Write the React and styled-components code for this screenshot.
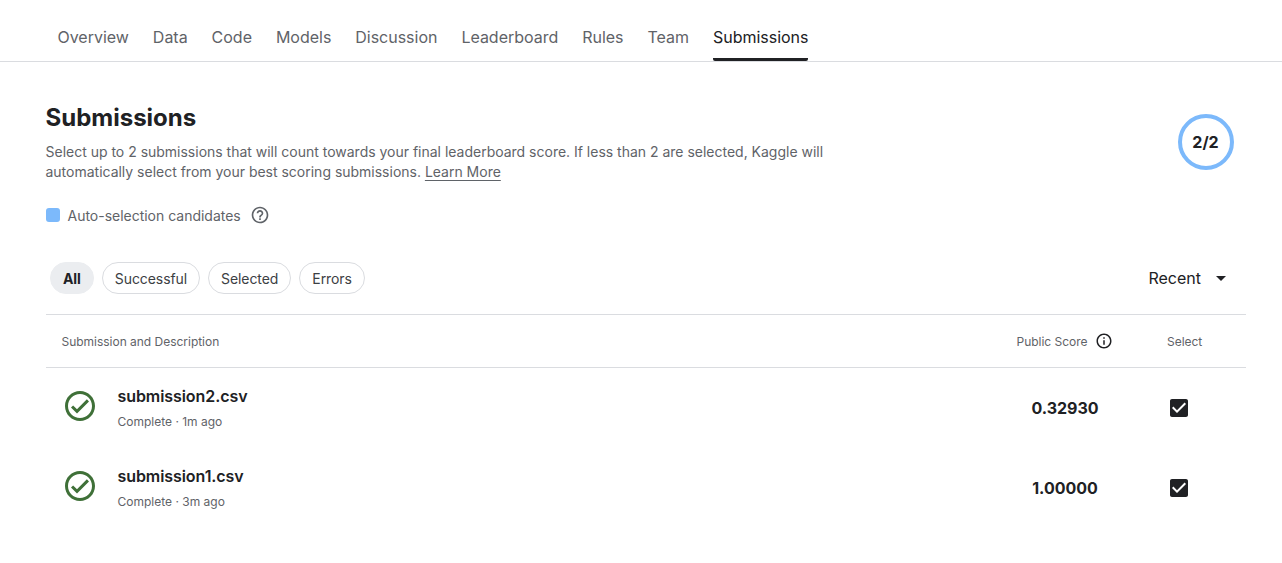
import React from "react";
import styled, { createGlobalStyle } from "styled-components";

const Global = createGlobalStyle`
  html, body { margin: 0; padding: 0; background: #fff; }
  body { font-family: Inter, "Noto Sans", sans-serif; color: #202124; overflow: hidden; }
  * { box-sizing: border-box; }
`;

const Page = styled.div`
  width: 1282px;
  height: 563px;
  display: flex;
  flex-direction: column;
`;

const TabBar = styled.nav`
  display: flex;
  gap: 24px;
  height: 62px;
  padding-left: 57.5px;
  border-bottom: 1px solid #dadce0;
`;

const Tab = styled.a`
  height: 61px;
  padding-top: 27px;
  font-size: 16px;
  line-height: 20px;
  letter-spacing: -0.02px;
  color: ${(p) => (p.$active ? "#202124" : "#5f6368")};
  border-bottom: 3px solid ${(p) => (p.$active ? "#202124" : "transparent")};
  border-radius: 0 0 2px 2px;
`;

const Content = styled.main`
  padding: 41px 36px 0 45.5px;
  display: flex;
  flex-direction: column;
`;

const Header = styled.header`
  display: flex;
  justify-content: space-between;
  align-items: flex-start;
`;

const Title = styled.h1`
  margin: 0 0 9px;
  font-size: 24px;
  line-height: 30px;
  font-weight: 700;
  color: #202124;
`;

const Description = styled.p`
  margin: 0;
  width: 800px;
  font-size: 14px;
  line-height: 20px;
  letter-spacing: -0.008px;
  color: #5f6368;
`;

const LearnMore = styled.a`
  color: #5f6368;
  text-decoration: underline;
  text-underline-offset: 3px;
  text-decoration-thickness: 1px;
`;

const Counter = styled.div`
  width: 56px;
  height: 56px;
  margin: 11px 12.5px 0 0;
  border: 4px solid #7cb9fb;
  border-radius: 50%;
  display: flex;
  align-items: center;
  justify-content: center;
  font-size: 16px;
  font-weight: 700;
  color: #202124;
`;

const Legend = styled.div`
  display: flex;
  align-items: center;
  margin-top: 23px;
  height: 20px;
  font-size: 14px;
  letter-spacing: -0.015px;
  color: #5f6368;
`;

const Swatch = styled.span`
  width: 14px;
  height: 14px;
  border-radius: 3px;
  background: #7cb9fb;
  margin-right: 8px;
`;

const HelpIcon = styled.svg`
  width: 20px;
  height: 20px;
  margin-left: 9px;
  fill: #5f6368;
`;

const FilterRow = styled.div`
  display: flex;
  align-items: center;
  justify-content: space-between;
  margin-top: 37px;
  height: 32px;
  padding-left: 4.5px;
`;

const Chips = styled.div`
  display: flex;
  gap: 8px;
`;

const Chip = styled.button`
  height: 32px;
  padding: 0 12px;
  border-radius: 16px;
  border: 1px solid ${(p) => (p.$active ? "#ebedf0" : "#dadce0")};
  background: ${(p) => (p.$active ? "#ebedf0" : "#fff")};
  font-family: inherit;
  font-size: 14px;
  letter-spacing: -0.08px;
  font-weight: ${(p) => (p.$active ? 700 : 400)};
  color: ${(p) => (p.$active ? "#202124" : "#3c4043")};
`;

const Sort = styled.div`
  display: flex;
  align-items: center;
  padding-right: 13px;
  font-size: 16px;
  color: #202124;
`;

const SortArrow = styled.svg`
  width: 24px;
  height: 24px;
  margin-left: 8px;
  fill: #202124;
`;

const TableHead = styled.div`
  display: grid;
  grid-template-columns: 1fr 120px 121px;
  align-items: center;
  height: 54px;
  margin-top: 20px;
  padding-left: 16px;
  border-top: 1px solid #dadce0;
  border-bottom: 1px solid #dadce0;
  font-size: 12px;
  letter-spacing: -0.02px;
  color: #5f6368;
`;

const ScoreHead = styled.div`
  display: flex;
  align-items: center;
  justify-content: center;
  gap: 8px;
`;

const InfoIcon = styled.svg`
  width: 18px;
  height: 18px;
  fill: #202124;
`;

const SelectHead = styled.div`
  padding-left: 42px;
`;

const Row = styled.div`
  display: grid;
  grid-template-columns: 1fr 120px 121px;
  align-items: center;
  height: 80px;
  padding-left: 16px;
`;

const NameCell = styled.div`
  display: flex;
  align-items: flex-start;
  gap: 20px;
  height: 80px;
`;

const StatusIcon = styled.svg`
  width: 36px;
  height: 36px;
  margin-top: 20px;
  fill: #3f7038;
  flex: none;
`;

const FileInfo = styled.div`
  display: flex;
  flex-direction: column;
  padding-top: 18px;
`;

const FileName = styled.div`
  font-size: 16px;
  line-height: 20px;
  letter-spacing: -0.07px;
  font-weight: 600;
  color: #202124;
`;

const Meta = styled.div`
  margin-top: 8px;
  font-size: 12px;
  line-height: 16px;
  color: #5f6368;
`;

const Score = styled.div`
  text-align: center;
  font-size: 16px;
  font-weight: 700;
  color: #202124;
`;

const SelectCell = styled.div`
  padding-left: 42px;
  display: flex;
`;

const CheckIcon = styled.svg`
  width: 24px;
  height: 24px;
  fill: #202124;
`;

const tabs = ["Overview", "Data", "Code", "Models", "Discussion", "Leaderboard", "Rules", "Team", "Submissions"];
const chips = ["All", "Successful", "Selected", "Errors"];
const rows = [
  { name: "submission2.csv", meta: "Complete · 1m ago", score: "0.32930" },
  { name: "submission1.csv", meta: "Complete · 3m ago", score: "1.00000" },
];

export default function App() {
  return (
    <Page>
      <Global />
      <TabBar>
        {tabs.map((t) => (
          <Tab key={t} $active={t === "Submissions"}>{t}</Tab>
        ))}
      </TabBar>
      <Content>
        <Header>
          <div>
            <Title>Submissions</Title>
            <Description>
              Select up to 2 submissions that will count towards your final leaderboard score. If less than 2 are selected, Kaggle will automatically select from your best scoring submissions. <LearnMore>Learn More</LearnMore>
            </Description>
          </div>
          <Counter>2/2</Counter>
        </Header>
        <Legend>
          <Swatch />
          Auto-selection candidates
          <HelpIcon viewBox="0 0 24 24">
            <path d="M11 18h2v-2h-2v2zm1-16C6.48 2 2 6.48 2 12s4.48 10 10 10 10-4.48 10-10S17.52 2 12 2zm0 18c-4.41 0-8-3.59-8-8s3.59-8 8-8 8 3.59 8 8-3.59 8-8 8zm0-14c-2.21 0-4 1.79-4 4h2c0-1.1.9-2 2-2s2 .9 2 2c0 2-3 1.75-3 5h2c0-2.25 3-2.5 3-5 0-2.21-1.79-4-4-4z" />
          </HelpIcon>
        </Legend>
        <FilterRow>
          <Chips>
            {chips.map((c) => (
              <Chip key={c} $active={c === "All"}>{c}</Chip>
            ))}
          </Chips>
          <Sort>
            Recent
            <SortArrow viewBox="0 0 24 24"><path d="M7 10l5 5 5-5z" /></SortArrow>
          </Sort>
        </FilterRow>
        <TableHead>
          <div>Submission and Description</div>
          <ScoreHead>
            Public Score
            <InfoIcon viewBox="0 0 24 24">
              <path d="M11 7h2v2h-2zm0 4h2v6h-2zm1-9C6.48 2 2 6.48 2 12s4.48 10 10 10 10-4.48 10-10S17.52 2 12 2zm0 18c-4.41 0-8-3.59-8-8s3.59-8 8-8 8 3.59 8 8-3.59 8-8 8z" />
            </InfoIcon>
          </ScoreHead>
          <SelectHead>Select</SelectHead>
        </TableHead>
        {rows.map((r) => (
          <Row key={r.name}>
            <NameCell>
              <StatusIcon viewBox="0 0 24 24">
                <path d="M12 2C6.48 2 2 6.48 2 12s4.48 10 10 10 10-4.48 10-10S17.52 2 12 2zm0 18c-4.41 0-8-3.59-8-8s3.59-8 8-8 8 3.59 8 8-3.59 8-8 8zm4.59-12.42L10 14.17l-2.59-2.58L6 13l4 4 8-8z" />
              </StatusIcon>
              <FileInfo>
                <FileName>{r.name}</FileName>
                <Meta>{r.meta}</Meta>
              </FileInfo>
            </NameCell>
            <Score>{r.score}</Score>
            <SelectCell>
              <CheckIcon viewBox="0 0 24 24">
                <path d="M19 3H5c-1.11 0-2 .9-2 2v14c0 1.1.89 2 2 2h14c1.11 0 2-.9 2-2V5c0-1.1-.89-2-2-2zm-9 14l-5-5 1.41-1.41L10 14.17l7.59-7.59L19 8l-9 9z" />
              </CheckIcon>
            </SelectCell>
          </Row>
        ))}
      </Content>
    </Page>
  );
}
